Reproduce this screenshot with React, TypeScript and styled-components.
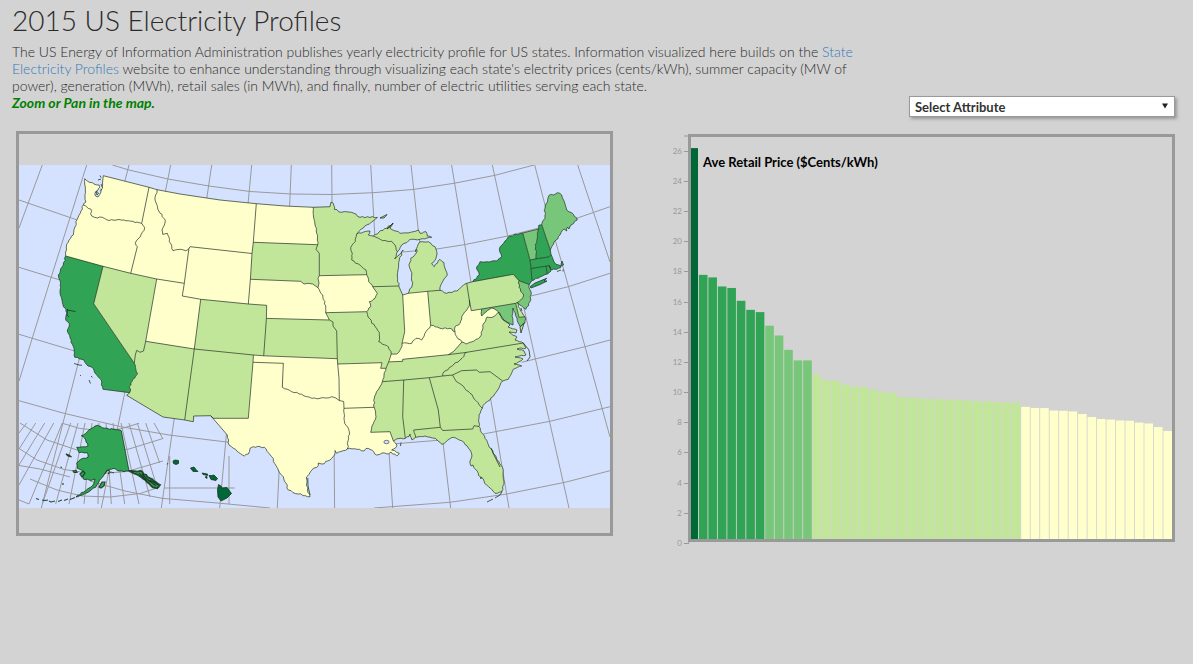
import React from "react";
import styled, { createGlobalStyle } from "styled-components";

const FONT = '"Century Gothic", Lato, "Open Sans", sans-serif';
const GREY = "#999999";

const SCALE = {
  a: "#ffffcc",
  b: "#c2e699",
  c: "#78c679",
  d: "#31a354",
  e: "#006837",
};
type Shade = keyof typeof SCALE;

const GlobalStyle = createGlobalStyle`
  * { box-sizing: border-box; }
  body {
    margin: 0;
    background: #d3d3d3;
    color: #2b2b2b;
    font-family: ${FONT};
    font-size: 14px;
    font-weight: 300;
    line-height: 17px;
  }
`;

const Page = styled.main`
  padding: 3px 18px 24px 12px;
`;

const Title = styled.h1`
  margin: 0 0 6px;
  font-size: 28px;
  line-height: 34px;
  font-weight: 300;
`;

const Header = styled.header`
  display: flex;
  justify-content: space-between;
  align-items: flex-end;
  gap: 24px;
`;

const Intro = styled.p`
  margin: 0 0 6px;
  white-space: nowrap;
`;

const Link = styled.a`
  color: #337ab7;
  text-decoration: none;
`;

const Hint = styled.strong`
  color: green;
  font-style: italic;
  font-weight: 700;
`;

const Picker = styled.label`
  position: relative;
  flex: 0 1 266px;
  height: 21px;
`;

const Select = styled.select`
  appearance: none;
  display: block;
  width: 100%;
  height: 21px;
  padding: 0 20px 0 5px;
  border: 1px solid ${GREY};
  border-radius: 0;
  background: #ffffff;
  box-shadow: 2px 2px 3px #999999;
  color: #333333;
  font-family: ${FONT};
  font-size: 13px;
  font-weight: 700;
`;

const Arrow = styled.svg`
  position: absolute;
  right: 7px;
  top: 7px;
  width: 6px;
  height: 6px;
  pointer-events: none;
`;

const Charts = styled.section`
  display: grid;
  grid-template-columns: minmax(0, 597fr) minmax(0, 505fr);
  column-gap: 57px;
  align-items: start;
  margin-top: 14px;
  padding-left: 4px;
`;

const MapFrame = styled.div`
  border: 3px solid ${GREY};
`;

const Drawing = styled.svg`
  display: block;
  width: 100%;
  height: auto;
`;

const BarFigure = styled.div`
  padding-top: 2px;
`;

const TickLabel = styled.text`
  font-family: ${FONT};
  font-size: 8px;
  font-weight: 400;
  fill: ${GREY};
  text-anchor: end;
`;

const ChartTitle = styled.text`
  font-family: ${FONT};
  font-size: 13px;
  font-weight: 700;
  fill: #000000;
`;

/* ---- Map geometry: borders are shared arcs, "~" marks coasts and rivers ---- */

const ARCS: Record<string, string> = {
  waN: "103.3,175.7 149,187.3",
  waCoast:
    "~103.3,175.7 102.7,181 102,187 101,192 98,197 95.5,196 95.5,192 98,190 100,187 99,185 94,184 88,181.5 84.7,178.7 84.7,184 85.3,190 85,197 86,202 83.3,205",
  waOr: "~83.3,205 90.7,209 91.7,216 97.3,218 102.3,217.3 106.7,219.7 114,220.3 124,220 141.7,223.3",
  waId: "149,187.3 141.7,223.3",
  orCoast: "~83.3,205 81,211 77.3,219.3 75,227 73.3,235 69,240 66.7,244.3 66.5,250 65.7,256",
  orCa: "65.7,256 103,266.3",
  orNv: "103,266.3 130.7,273.3",
  orId: "~141.7,223.3 144.7,227.7 142.3,232.3 135.3,243.3 137.3,246.7 130.7,273.3",
  idN: "149,187.3 157,189.7",
  idMt: "~157,189.7 155,200 157.7,209 165.3,220 162,230 162.7,234.3 167.3,233.3 169.3,241.7 173,250.7 180.7,249.3 185.7,250.7 188.9,248.5",
  idWy: "188.9,248.5 184.3,283.3",
  idNv: "130.7,273.3 156.7,279",
  idUt: "156.7,279 184.3,283.3",
  utWy: "184.3,283.3 182.3,296 200.7,299.3",
  utCo: "200.7,299.3 194.3,349",
  utAz: "194.3,349 145.7,341.3",
  utNv: "145.7,341.3 156.7,279",
  nvAz: "145.7,341.3 143.5,351 140,352.3 136.7,350.3 135.3,355 134.3,363.3",
  nvCa: "134.3,363.3 93.7,303.7 103,266.3",
  caCoast:
    "~65.7,256 63.3,265 58.3,275 60.7,283 60,292 62,300 63.3,306.7 66,309 67,313 65.7,320 69.3,323.3 67.3,330 70,338 74,348.3 74.7,357.3 84,360 88,366 93.3,368.3 94.7,372.7 101.3,380 103,389.3",
  caS: "103,389.3 129.7,392.7",
  caAz: "~134.3,363.3 137.7,374 133,379 129.3,386.7 130.7,390 129.7,392.7",
  azS: "129.7,392.7 126.7,395.3 163,417 184.7,420",
  azNm: "194.3,349 184.7,420",
  nmS: "184.7,420 193.3,421.7 193.7,416 210.7,415.7",
  nmTxS: "210.7,415.7 213,418.3 248.3,418.3",
  nmTxE: "248.3,418.3 253,362.3",
  nmOk: "253,362.3 253.4,355",
  nmCo: "194.3,349 253.4,355",
  coOk: "253.4,355 263.7,355.8",
  coKs: "263.7,355.8 266.4,318.4",
  coNe: "266.4,318.4 266.7,305.3 248.3,304",
  coWy: "248.3,304 200.7,299.3",
  wyMt: "188.9,248.5 190,246.7 252,253.5",
  wySd: "252,253.5 250.4,279.3",
  wyNe: "250.4,279.3 248.3,304",
  mtN: "157,189.7 180,194 220,200 256.3,203.7",
  mtNd: "256.3,203.7 253.3,242.3",
  mtSd: "253.3,242.3 252,253.5",
  ndN: "256.3,203.7 285,206 313.3,207.3",
  ndMn: "~313.3,207.3 314.7,221.7 316.7,233.3 317.7,244.7",
  ndSd: "253.3,242.3 317.7,244.7",
  sdMn: "317.7,244.7 316,249.3 319.3,253.3 319.3,275.7",
  sdIa: "319.3,275.7 318,278.3 319,283 318,287.7",
  sdNe: "250.4,279.3 300.7,281.3 304,284 308,283.3 312.7,284 318,287.7",
  neIa: "~318,287.7 322.7,295 325.7,308.3 325.7,312.7",
  neMo: "~325.7,312.7 329.3,320",
  neKs: "266.4,318.4 329.3,320",
  ksMo: "329.3,320 333,322 333,326 336.7,331 337.3,358.7",
  ksOk: "263.7,355.8 337.3,358.7",
  okMo: "337.3,358.7 337.7,364",
  okAr: "337.7,364 339,378.3 339.3,400.5",
  okTx: "~253,362.3 253.3,362.3 283.3,363.3 282.3,387.3 291.7,391.7 301.7,394.3 311.7,398.3 320,398.3 331.7,396.7 339.3,400.5",
  arTx: "339.3,400.5 343.7,401.5 344,408.3",
  arLa: "344,408.3 374.2,407.3",
  arMo: "337.7,364 382,362.7 380.7,368.3 386,368.3",
  arTn: "~386,368.3 384,375 382.3,381.7",
  arMs: "~382.3,381.7 378,390 374.3,398.3 374.2,407.3",
  txLa: "~344,408.3 344.3,420.7 349.3,431.7 348,441 347.3,449",
  txCoast:
    "~347.3,449 336.7,453.3 335,450.5 334.5,455 330,460 322,464 318.3,463 318.3,465.5 312,470 309.3,474 306.5,477 306.7,483.3 307.5,490 310,496.7",
  txMx: "~310,496.7 298.3,494 288.3,490 283.3,476.7 278.3,470 271.7,456.7 264.3,447.3 253.3,446.7 250,448.3 248.3,454 244.3,456 233.3,448.3 229,445 227.3,435 210.7,415.7",
  laMs: "~374.2,407.3 376,416.7 372,426 370.7,432.3",
  laMsS: "370.7,432.3 390,431.7 393.3,440.7",
  laCoast:
    "~347.3,449 356.7,449.3 364,451 366,448.5 370,449.3 376.7,455 382,453 388.3,454 391,452 396.7,456 399.3,453.3 391.7,450 397,446 393.3,440.7",
  mnN: "313.3,207.3 330,206.7 331,202",
  mnCan: "~331,202 333.3,203.3 334.3,209.3 341.7,212.3 351.7,212.3 360,217.3 377.3,217.3",
  mnLake: "~377.3,217.3 366.7,225 356.7,234",
  mnWi: "~356.7,234 355.3,241.7 350.7,247.7 352.3,253.3 351.7,260 361.7,266.7 366,270 366.7,274.7",
  mnIa: "319.3,275.7 366.7,274.7",
  iaWi: "~366.7,274.7 368.7,281.7 372.7,286.7",
  iaIl: "~372.7,286.7 377.3,293.3 375,298.3 369.3,301.7 370.7,306.7 366.7,311.7",
  iaMo: "366.7,311.7 325.7,312.7",
  wiN: "~356.7,234 370,231 368.3,235 373.3,236",
  wiMi: "~373.3,236 382.7,240.7 391.7,241.3 395,245 397.3,251.7",
  wiLake: "~397.3,251.7 394.7,259 399,255 403.3,250 399.3,260 397.3,275 398.7,286",
  wiIl: "398.7,286 372.7,286.7",
  miUp: "~373.3,236 379,232 386.7,228.3 393,223 390,228.3 400,233.3 408,233 418.3,230 420,233.3 426,231.7 427.3,236 431.7,237.3 420,239.3 411.7,239.3 406.7,242.7 401.7,245 397.3,251.7",
  ilLake: "398.7,286 402.7,295",
  ilIn: "402.7,295 404.7,331.7 402,343.3",
  ilKy: "~402,343.3 401,348.3 396.7,354 391.3,354",
  ilMo: "~366.7,311.7 368,317 375,326.7 379.3,332.3 378.7,341.7 388.3,346.7 391.3,354",
  moKy: "391.3,354 388.7,361.9",
  moTn: "388.7,361.9 386,368.3",
  kyTn: "388.7,361.9 402.7,361.3 402.7,359.3 448.3,354.7",
  kyVa: "448.3,354.7 453.3,351.7 462,342",
  inLake: "402.7,295 408.3,293.3",
  inMi: "408.3,293.3 427.7,291.3",
  inOh: "427.7,291.3 430.7,325.3",
  inKy: "~402,343.3 411.7,343.3 416,338.3 421.7,340 426,331.7 430.7,325.3",
  ohMi: "427.7,291.3 440,290.3",
  miLp: "~408.3,293.3 412.3,285 411.7,275 409.3,266.7 410.7,258.3 416,253.3 417.3,246.7 420,241.7 428.3,241.7 435,246.7 436.7,251.7 436,258.3 431.7,263.3 434.3,266.7 440,259.3 444,262.7 447.3,275 441.7,283.3 440,290.3",
  ohLake: "~440,290.3 446.7,293.3 456.7,291 466.7,283.3",
  ohPa: "466.7,283.3 469.3,300",
  ohWv: "~469.3,300 469.3,306 461.7,316.7 460,323.3 455,326.7 455,331.7",
  ohKy: "~430.7,325.3 440,328.3 450,328.3 455,331.7",
  kyWv: "~455,331.7 456.7,336.7 462,342",
  wvPaW: "469.3,300 471.3,310.7 481.7,309",
  wvMd: "~481.7,309 481.7,316 486,312 491.7,308 498.5,312",
  wvVa: "~462,342 466,344 474,341 480,337 484,323 487,317 493,317 498.5,312",
  paMd: "481.7,309 515.7,303.3",
  paDe: "515.7,303.3 517.3,302.5",
  paNj: "~517.3,302.5 520.7,300 523.7,295 519,287.3 519,280.7",
  paNy: "472.7,281.7 513.3,274.3 519,280.7",
  paLake: "466.7,283.3 472.7,281.7",
  nyLake: "~472.7,281.7 479.3,275 476.7,266.7 480,261.7 496.7,261 501.7,256.7 499.3,249.3 505,241 510,236 522.7,233",
  nyVt: "522.7,233 526,245 530,260",
  nyMa: "530,260 531,268.5",
  nyCt: "531,268.5 532,280.5",
  nyNj: "519,280.7 529.3,284.5",
  nyBay: "529.3,284.5 532,280.5",
  vtN: "522.7,233 538.7,229",
  vtNh: "~538.7,229 537.3,238.3 535.7,246.7 536,258.8",
  vtMa: "530,260 536,258.8",
  nhN: "538.7,229 538.7,225.3 541.7,224.7",
  nhMe: "541.7,224.7 550.3,250",
  nhSea: "550.3,250 551,254.5",
  nhMa: "536,258.8 548.7,257 551,254.5",
  me: "~541.7,224.7 545,218.3 545,208.3 549.3,195 553.3,195 557.3,192.7 561.7,195 566.7,210 571.7,212.7 577.3,220 571,225 569,229 567.5,227 566.7,231 564,229 560,235 556,240 551.7,246.7 550.3,250",
  maSea: "~551,254.5 553.3,260 556,264.3 561,266 562,261 563.5,265 558.3,268.3 551.7,270 549.3,265.5",
  maRi: "549.3,265.5 546,266.2",
  maCt: "546,266.2 531,268.5",
  ctRi: "546,266.2 547.3,274",
  ctSea: "~547.3,274 540,277 532,280.5",
  riSea: "~549.3,265.5 551,271 547.3,274",
  njSea: "~529.3,284.5 528.7,286.7 531,291.7 530,301.7 526,309.3 520,305 517.3,302.5",
  deMd: "515.7,303.3 519,317.3 525,316.7",
  deSea: "~517.3,302.5 518.3,306.7 525,316.7",
  mdBay: "~525,316.7 525,323 520,326.5 517,318 513,308 512,316 513,325 509,323 503.3,320 498.5,312",
  vaSea: "~498.5,312 503.3,320 510,325 508,327 517,330 516,333 509,332 517,337 515,340 523.3,343",
  vaNc: "523.3,343 466.7,352.3",
  vaTn: "466.7,352.3 448.3,354.7",
  tnNc: "~466.7,352.3 460,360 453.3,365 444,371.7 442.7,376",
  tnMs: "382.3,381.7 403.7,380",
  tnAl: "403.7,380 429.3,377.7",
  tnGa: "429.3,377.7 442.7,376",
  ncGa: "442.7,376 452.5,375",
  ncSc: "452.5,375 461.7,370.7 476.7,370 479.3,372.3 490,371.7 502.7,381",
  ncSea:
    "~523.3,343 526,348 517,349 524,351 526,355 515,357 523,359 514,364 521.7,366 513.3,369.3 508.3,379.3 502.7,381",
  scGa: "~452.5,375 455,379.3 470,393.3 482.3,408.3",
  scSea: "~502.7,381 497.7,390 490,400 485,403.3 482.3,408.3",
  alGa: "429.3,377.7 438.3,410 440.3,427.3",
  alMs: "403.7,380 402.7,416.7 405.3,438.3",
  alFlN: "440.3,427.3 413.7,430",
  alFlW: "~413.7,430 415.7,437.3",
  alSea: "~405.3,438.3 409,436.5 410,434 412,440 415.7,437.3",
  msSea: "~393.3,440.7 399,438.5 405.3,438.3",
  gaFl: "440.3,427.3 442.7,430.5 472.7,429 474,425.7 479,426.5",
  gaSea: "~482.3,408.3 479,415 479,426.5",
  flSea: "~479,426.5 485,438.3 493.3,453.3 503.3,470 504,481.7 501.7,491.7 495,493.3 486.7,485 481,477 481,479 478.3,473.3 473,465 471,466 470,461 472,456 470,450 461.7,440.7 453.3,437.3 441.7,444.3 435,438.3 425,436 415.7,437.3",
};

/* Each state: shade, then its arcs in order around the outline. */
const STATES: [string, Shade, string][] = [
  ["Washington", "a", "waN waId waOr waCoast"],
  ["Oregon", "a", "waOr orId orNv orCa orCoast"],
  ["California", "d", "orCa nvCa caAz caS caCoast"],
  ["Nevada", "b", "orNv idNv utNv nvAz nvCa"],
  ["Idaho", "a", "idN idMt idWy idUt idNv orId waId"],
  ["Utah", "a", "idUt utWy utCo utAz utNv"],
  ["Arizona", "b", "utAz azNm azS caAz nvAz"],
  ["Montana", "a", "mtN mtNd mtSd wyMt idMt"],
  ["Wyoming", "a", "wyMt wySd wyNe coWy utWy idWy"],
  ["Colorado", "b", "coWy coNe coKs coOk nmCo utCo"],
  ["New Mexico", "b", "nmCo nmOk nmTxE nmTxS nmS azNm"],
  ["North Dakota", "a", "ndN ndMn ndSd mtNd"],
  ["South Dakota", "b", "ndSd sdMn sdIa sdNe wySd mtSd"],
  ["Nebraska", "a", "sdNe neIa neMo neKs coNe wyNe"],
  ["Kansas", "b", "neKs ksMo ksOk coKs"],
  ["Oklahoma", "a", "coOk ksOk okMo okAr okTx nmOk"],
  ["Texas", "a", "okTx arTx txLa txCoast txMx nmTxS nmTxE"],
  ["Minnesota", "b", "mnN mnCan mnLake mnWi mnIa sdMn ndMn"],
  ["Iowa", "a", "mnIa iaWi iaIl iaMo neIa sdIa"],
  ["Missouri", "b", "iaMo ilMo moKy moTn arMo okMo ksMo neMo"],
  ["Arkansas", "a", "arMo arTn arMs arLa arTx okAr"],
  ["Louisiana", "a", "arLa laMs laMsS laCoast txLa"],
  ["Wisconsin", "b", "wiN wiMi wiLake wiIl iaWi mnWi"],
  ["Upper Michigan", "b", "wiMi miUp"],
  ["Michigan", "b", "inMi ohMi miLp"],
  ["Illinois", "b", "wiIl ilLake ilIn ilKy ilMo iaIl"],
  ["Indiana", "a", "inLake inMi inOh inKy ilIn"],
  ["Ohio", "b", "ohMi ohLake ohPa ohWv ohKy inOh"],
  ["Kentucky", "a", "inKy ohKy kyWv kyVa kyTn moKy ilKy"],
  ["Tennessee", "b", "kyTn vaTn tnNc tnGa tnAl tnMs arTn moTn"],
  ["Mississippi", "b", "tnMs alMs msSea laMsS laMs arMs"],
  ["Alabama", "b", "tnAl alGa alFlN alFlW alSea alMs"],
  ["Georgia", "b", "tnGa ncGa scGa gaSea gaFl alGa"],
  ["Florida", "b", "gaFl flSea alFlW alFlN"],
  ["South Carolina", "b", "ncSc scSea scGa"],
  ["North Carolina", "b", "vaNc ncSea ncSc ncGa tnNc"],
  ["Virginia", "b", "wvVa vaSea vaNc vaTn kyVa"],
  ["West Virginia", "a", "wvPaW wvMd wvVa kyWv ohWv"],
  ["Pennsylvania", "b", "paLake paNy paNj paDe paMd wvPaW ohPa"],
  ["Maryland", "c", "paMd deMd mdBay wvMd"],
  ["Delaware", "b", "paDe deSea deMd"],
  ["New Jersey", "c", "nyNj njSea paNj"],
  ["New York", "d", "nyLake nyVt nyMa nyCt nyBay nyNj paNy"],
  ["Vermont", "c", "vtN vtNh vtMa nyVt"],
  ["New Hampshire", "d", "nhN nhMe nhSea nhMa vtNh"],
  ["Maine", "c", "nhMe me"],
  ["Massachusetts", "d", "vtMa nhMa maSea maRi maCt nyMa"],
  ["Connecticut", "d", "maCt ctRi ctSea nyCt"],
  ["Rhode Island", "d", "maRi riSea ctRi"],
];

type Point = [number, number];

const noise = (x: number, y: number) => {
  const s = Math.sin(x * 12.9898 + y * 78.233) * 43758.5453;
  return s - Math.floor(s) - 0.5;
};

/* Breaks coast and river arcs into short wandering steps. */
function points(source: string): Point[] {
  const rough = source.startsWith("~");
  const raw = source
    .replace("~", "")
    .split(" ")
    .map((p) => p.split(",").map(Number) as Point);
  if (!rough) return raw;
  const out: Point[] = [raw[0]];
  for (let i = 1; i < raw.length; i++) {
    const [x0, y0] = raw[i - 1];
    const [x1, y1] = raw[i];
    const length = Math.hypot(x1 - x0, y1 - y0);
    const steps = length > 23 ? 1 : Math.max(1, Math.round(length / 2.4));
    for (let k = 1; k < steps; k++) {
      const x = x0 + ((x1 - x0) * k) / steps;
      const y = y0 + ((y1 - y0) * k) / steps;
      const off = noise(x, y) * 1.5;
      out.push([x - ((y1 - y0) / length) * off, y + ((x1 - x0) / length) * off]);
    }
    out.push([x1, y1]);
  }
  return out;
}

const LINES: Record<string, Point[]> = Object.fromEntries(
  Object.entries(ARCS).map(([name, source]) => [name, points(source)])
);

const gap = (a: Point, b: Point) => Math.hypot(a[0] - b[0], a[1] - b[1]);
const last = (line: Point[]) => line[line.length - 1];
const path = (line: Point[]) => "M" + line.map(([x, y]) => `${x.toFixed(1)},${y.toFixed(1)}`).join("L");

function outline(names: string) {
  const lines = names.split(" ").map((n) => LINES[n]);
  const next = lines[1];
  const first = lines[0];
  const endFits = Math.min(gap(last(first), next[0]), gap(last(first), last(next)));
  const startFits = Math.min(gap(first[0], next[0]), gap(first[0], last(next)));
  let ring = endFits <= startFits ? [...first] : [...first].reverse();
  for (const line of lines.slice(1)) {
    const end = last(ring);
    ring = ring.concat(gap(end, line[0]) <= gap(end, last(line)) ? line : [...line].reverse());
  }
  return path(ring) + "Z";
}

const GRATICULE = [
  "M42.3,165L19,228",
  "M86.7,165L50.3,280L19,381",
  "M129,165L79,360L41.3,508",
  "M170.7,165L124.7,393L101.3,508",
  "M211.7,165L174,420L161.3,508",
  "M251.7,165L226.3,435L219.7,508",
  "M291.3,165L279,473L277.3,508",
  "M331.7,165L334.6,508",
  "M370.7,165L374.7,233L392.7,508",
  "M411,165L418.3,230L443.3,445L450.7,508",
  "M451.6,165L470.3,278L509,508",
  "M492.3,165L507.7,236L569,508",
  "M534.7,165L545,205L563.3,268L610,437",
  "M577.7,165L610,262",
  "M112.3,165L129,170L168,179L209,186L250,191.5L291,194L331,194.5L373,192.7L413,189.5L454,183.3L495,175.3L534,165",
  "M19,200L77.3,220M403,252L436.7,249L464.3,244.7L507.7,236L576.7,218.3L610,206.7",
  "M19,267.3L60,280M531,296L568.3,286.7L610,273.3",
  "M19,334.3L74.7,351M521.7,362.3L585,346.7L610,340",
  "M19,400.7L64,413.3L120.7,426.7L169,435L229,442.3M392,444L441.7,440M483.3,434L550,421.3L610,406.7",
  "M90,481L125,491L162,498.3L220.7,503.3L270,508M374,508L450,502.3L506.7,494L565,482.3L610,470.7",
];

const INSET_GRID = [
  "M26.7,423L19,433M35.7,423L19,449M44.7,423L19,465M53.7,423L19,485M62.3,423L29,504M70.7,423L42.3,504M78,423L55.7,504M85,423L69,504M92,423L84,504M99,423L98,504M106,423L111.3,504M113,423L124.7,504M121,423L139,504M129,423L150,497M137.3,423L157.3,488M145.7,423L159.7,463M154,423L163,439",
  "M62.3,423.3L80,428.5L100,430.5L120,429L139,423.3",
  "M20,423L47,440L77,450L103,453L129,449L163,438.5",
  "M19,448.5L37,460L64,469.5L95,474L127,471.5L163,461",
  "M19,465.5L40,469L70,477",
  "M30,479L57,490L82,496L110,497L140,493.5L160,487",
  "M19,500L29,504",
  "M169.7,456V504M229,456V504M164,488H234.7",
];

const ALASKA =
  "~97.3,425.3 102.3,427.7 114,429.3 121.3,430.7 129,471 124,471.7 117.3,470.7 114,468.3 109,469.3 104,475 101.3,478.3 95.7,487.3 89,491.7 82.3,495 76,497 85.7,490.7 92.3,486 95,479 89,480 83,478.7 83.3,471.7 77.3,468.3 76.7,463.3 80.7,459.3 88,457.3 87.3,452.7 79,452.7 76.7,447.3 82.3,446.7 88,446 85.7,440 81.3,435.7 87.3,431.7 97.3,425.3";

const ALASKA_PANHANDLE =
  "~129,471 137.3,471.7 140.7,470.7 147.3,476.7 154,481 160,485 157.3,488.3 151.3,486 147,482 142.3,478 138,475 134,473.5 129,471";

const ALASKA_ISLANDS =
  "M99,487L102,482L105,482L104,486L101,488ZM66,454L69,455L71.5,457L68,456ZM73,471L76,470.5L77,472.5L74,472.5ZM80,474L83,471L85,473L82,477ZM60.5,467L62,467.5M63,483V485M75,497.5L70,499.5M68,499L64,500.5M62,500L58,501.5M55,501L51,502M36,498.5L39,499.5M42,500L45,500.5L48,500M49,501L51,502";

const HAWAII =
  "M173,461L175,460L178.5,460.5L178.5,463.5L176,464.5L173.5,463.5ZM167,464.5L168,463M190.5,468L194,467L196,469.5L198,471.5L193,471.5ZM202,473L207.5,474L207.5,475.5L203,474.5ZM205,477L207,476.5L207,478.5ZM209,475.5L211.5,475.5L214,475L217.5,478.5L216,480.5L211,479.5ZM218.5,484.5L221,486L222,488L227,487.5L231.5,493.5L227,498L221,501L218,497L217.5,490Z";

const SMALL_ISLANDS: [Shade, string][] = [
  ["d", "M530,286.7L535,283L540,281L546.7,278.3L544,281L547,281L540,284.5L531,288Z"],
  ["b", "M520,327L524,323.5L521,333Z"],
  ["b", "M380,218L387,214.5L384,218Z"],
  ["b", "M387,229L393,223L391.5,226Z"],
  ["d", "M74,363.5L79,365L82,365.3M91,376L92.5,377.5M89,380L90.5,383.5M80,375.3L81,375.6"],
  ["d", "M557,271.5L561,270M563,271.5L563,269.5"],
  ["b", "M502,491.5L500,495L495,498M493,499L487,502"],
  ["d", "M67,310L70,310.5L75.5,311.5M67.5,309L67,315L69,317"],
  ["b", "M400.5,446L401,442.5M415.5,252L416,249"],
  ["b", "M491,448L493,453L496,459L500,467"],
  ["b", "M523.3,343L529,350L530,357L527,361M521,308L522,311"],
  ["a", "M98,180L101,179M100,175.5L101,177.5M101,184L102.5,188L100.5,191M96,191L97,195L98.5,193Z"],
  ["a", "M307.8,478L308,486L310,495"],
];

function StateMap() {
  return (
    <Drawing viewBox="19 134 591 399" role="img" aria-label="Average retail price by state">
      <defs>
        <clipPath id="sea">
          <rect x="19" y="165" width="591" height="343" />
        </clipPath>
      </defs>
      <rect x="19" y="165" width="591" height="343" fill="#d5e2ff" />
      <g clipPath="url(#sea)" fill="none" stroke={GREY} strokeWidth="1">
        {GRATICULE.map((d) => (
          <path key={d} d={d} />
        ))}
        {INSET_GRID.map((d) => (
          <path key={d} d={d} />
        ))}
      </g>
      {STATES.map(([name, shade, arcs]) => (
        <path key={name} d={outline(arcs)} fill={SCALE[shade]} />
      ))}
      <g fill="none" stroke="#1c2a1c" strokeOpacity="0.75" strokeWidth="0.9" strokeLinejoin="round">
        {Object.entries(LINES).map(([name, line]) => (
          <path key={name} d={path(line)} />
        ))}
      </g>
      <ellipse cx="386.5" cy="442" rx="2.6" ry="1.7" fill="#d5e2ff" stroke="#445" strokeWidth="0.7" />
      <g stroke="#14301c" strokeOpacity="0.85" strokeWidth="0.9">
        <path d={path(points(ALASKA)) + "Z"} fill={SCALE.d} />
        <path d={path(points(ALASKA_PANHANDLE)) + "Z"} fill={SCALE.d} strokeWidth="1.8" />
        <path d="M139,473L146,480M142,474L150,482M147,479L156,486M150,480L158,485" strokeWidth="1.1" />
        <path d="M105,474L107,470L110,471L108,474L111,472L114,473" fill="none" />
        <path d={ALASKA_ISLANDS} fill={SCALE.d} strokeWidth="1.2" />
        <path d={HAWAII} fill={SCALE.e} />
        {SMALL_ISLANDS.map(([shade, d]) => (
          <path key={d} d={d} fill={d.endsWith("Z") ? SCALE[shade] : "none"} />
        ))}
      </g>
    </Drawing>
  );
}

/* ---- Bar chart ---- */

const PRICES = [
  26.17, 17.77, 17.6, 17.0, 16.9, 16.05, 15.45, 15.3, 14.4, 13.75, 12.8, 12.1, 12.1, 11.15, 10.78, 10.74, 10.5,
  10.35, 10.33, 10.15, 10.0, 9.93, 9.65, 9.63, 9.58, 9.55, 9.53, 9.5, 9.48, 9.43, 9.4, 9.38, 9.35, 9.32, 9.3, 9.02,
  8.95, 8.94, 8.78, 8.76, 8.72, 8.55, 8.35, 8.22, 8.18, 8.12, 8.1, 7.98, 7.92, 7.68, 7.42,
];

const shadeOf = (price: number) =>
  price > 20 ? SCALE.e : price > 15 ? SCALE.d : price > 12 ? SCALE.c : price > 9.1 ? SCALE.b : SCALE.a;

const ZERO = 543;
const UNIT = 15.09;
const TICKS = Array.from({ length: 14 }, (_, i) => i * 2);

function PriceChart() {
  return (
    <Drawing viewBox="670 133 505 414" role="img" aria-label="Average retail price, sorted">
      {PRICES.map((price, i) => {
        const top = ZERO - price * UNIT;
        return <rect key={i} x={689.4 + i * 9.48} y={top} width="8.6" height={540 - top} fill={shadeOf(price)} />;
      })}
      <rect x="689.5" y="135.5" width="484" height="405" fill="none" stroke={GREY} strokeWidth="3" />
      <path d="M684,136H690M689,136V543" stroke={GREY} fill="none" />
      {TICKS.map((tick) => {
        const y = Math.round(ZERO - tick * UNIT) + 0.5;
        return (
          <g key={tick}>
            <path d={`M684,${y}H689`} stroke={GREY} />
            <TickLabel x="682" y={y + 2.5}>
              {tick}
            </TickLabel>
          </g>
        );
      })}
      <ChartTitle x="703" y="167">
        Ave Retail Price ($Cents/kWh)
      </ChartTitle>
    </Drawing>
  );
}

export default function App() {
  return (
    <>
      <GlobalStyle />
      <Page>
        <Title>2015 US Electricity Profiles</Title>
        <Header>
          <Intro>
            The US Energy of Information Administration publishes yearly electricity profile for US states. Information
            visualized here builds on the <Link href="#profiles">State</Link>
            <br />
            <Link href="#profiles">Electricity Profiles</Link> website to enhance understanding through visualizing each
            state's electrity prices (cents/kWh), summer capacity (MW of
            <br />
            power), generation (MWh), retail sales (in MWh), and finally, number of electric utilities serving each
            state.
            <br />
            <Hint>Zoom or Pan in the map.</Hint>
          </Intro>
          <Picker>
            <Select aria-label="Attribute" defaultValue="none">
              <option value="none">Select Attribute</option>
            </Select>
            <Arrow viewBox="0 0 7 6" aria-hidden="true">
              <path d="M0 0H7L3.5 6Z" fill="#222222" />
            </Arrow>
          </Picker>
        </Header>
        <Charts>
          <MapFrame>
            <StateMap />
          </MapFrame>
          <BarFigure>
            <PriceChart />
          </BarFigure>
        </Charts>
      </Page>
    </>
  );
}
